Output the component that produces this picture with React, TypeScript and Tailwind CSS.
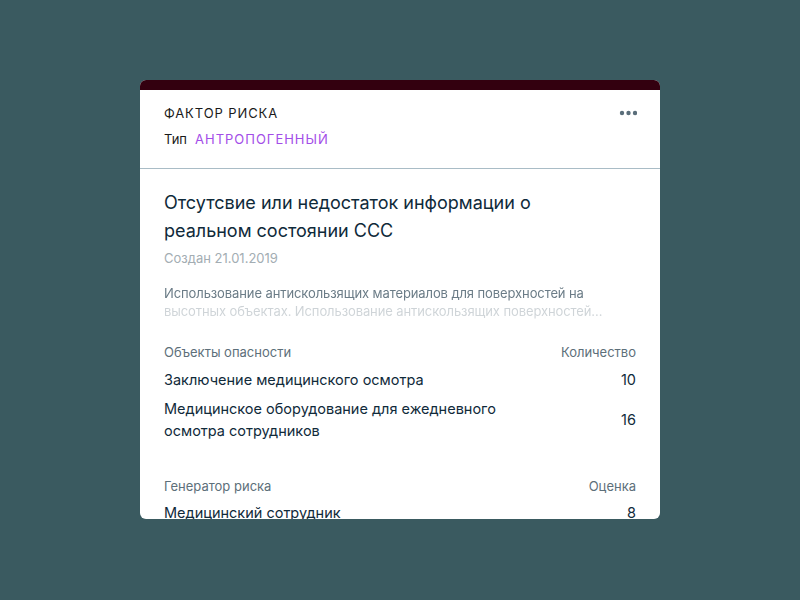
const objects = [
  { name: "Заключение медицинского осмотра", count: 10 },
  { name: "Медицинское оборудование для ежедневного осмотра сотрудников", count: 16 },
];

const App = () => {
  return (
    <div className="w-[800px] h-[600px] bg-[#3a5a60] flex justify-center pt-[80px] font-['Inter','Noto_Sans',sans-serif]">
      <div className="w-[520px] h-[439px] bg-white rounded-[6px] overflow-hidden flex flex-col">
        <div className="h-[10px] bg-[#33000f] shrink-0" />
        <div className="px-6 pt-[13px] pb-[19px] border-b border-[#a9bcc6]">
          <div className="flex items-center justify-between">
            <span className="text-[13px] leading-5 tracking-[0.9px] text-[#1a1a1a]">ФАКТОР РИСКА</span>
            <svg width="18" height="6" viewBox="0 0 18 6" className="fill-[#5a6e7a] mr-[-1px]">
              <circle cx="3" cy="3" r="2.2" />
              <circle cx="9.5" cy="3" r="2.2" />
              <circle cx="16" cy="3" r="2.2" />
            </svg>
          </div>
          <div className="mt-[6px] text-[13px] leading-5 flex gap-2">
            <span className="text-[#1a1a1a]">Тип</span>
            <span className="text-[#a34de8] tracking-[1px]">АНТРОПОГЕННЫЙ</span>
          </div>
        </div>
        <div className="px-6 pt-5">
          <h1 className="text-[18px] leading-[28px] text-[#0f2a3a] pr-24">
            Отсутсвие или недостаток информации о реальном состоянии ССС
          </h1>
          <p className="mt-[3px] text-[13px] leading-5 text-[#a3adb3]">Создан 21.01.2019</p>
          <p className="mt-4 text-[13px] leading-[18px] tracking-[-0.1px] text-[#6b7c87] line-clamp-2 pr-8 [mask-image:linear-gradient(to_bottom,black_50%,rgba(0,0,0,0.35)_55%,rgba(0,0,0,0.3))]">
            Использование антискользящих материалов для поверхностей на высотных объектах. Использование антискользящих поверхностей для защиты сотрудников от падения.
          </p>
          <div className="mt-[22px] flex justify-between text-[13px] leading-5 text-[#5d6f7a]">
            <span>Объекты опасности</span>
            <span>Количество</span>
          </div>
          {objects.map((o) => (
            <div key={o.name} className="mt-[7px] flex items-center justify-between text-[14.5px] leading-[22px] text-[#102a3a]">
              <span className="w-[350px]">{o.name}</span>
              <span>{o.count}</span>
            </div>
          ))}
          <div className="mt-[34px] flex justify-between text-[13px] leading-5 text-[#5d6f7a]">
            <span>Генератор риска</span>
            <span>Оценка</span>
          </div>
          <div className="mt-[6px] flex items-center justify-between text-[14.5px] leading-[22px] text-[#102a3a]">
            <span>Медицинский сотрудник</span>
            <span>8</span>
          </div>
        </div>
      </div>
    </div>
  );
};

export default App;
